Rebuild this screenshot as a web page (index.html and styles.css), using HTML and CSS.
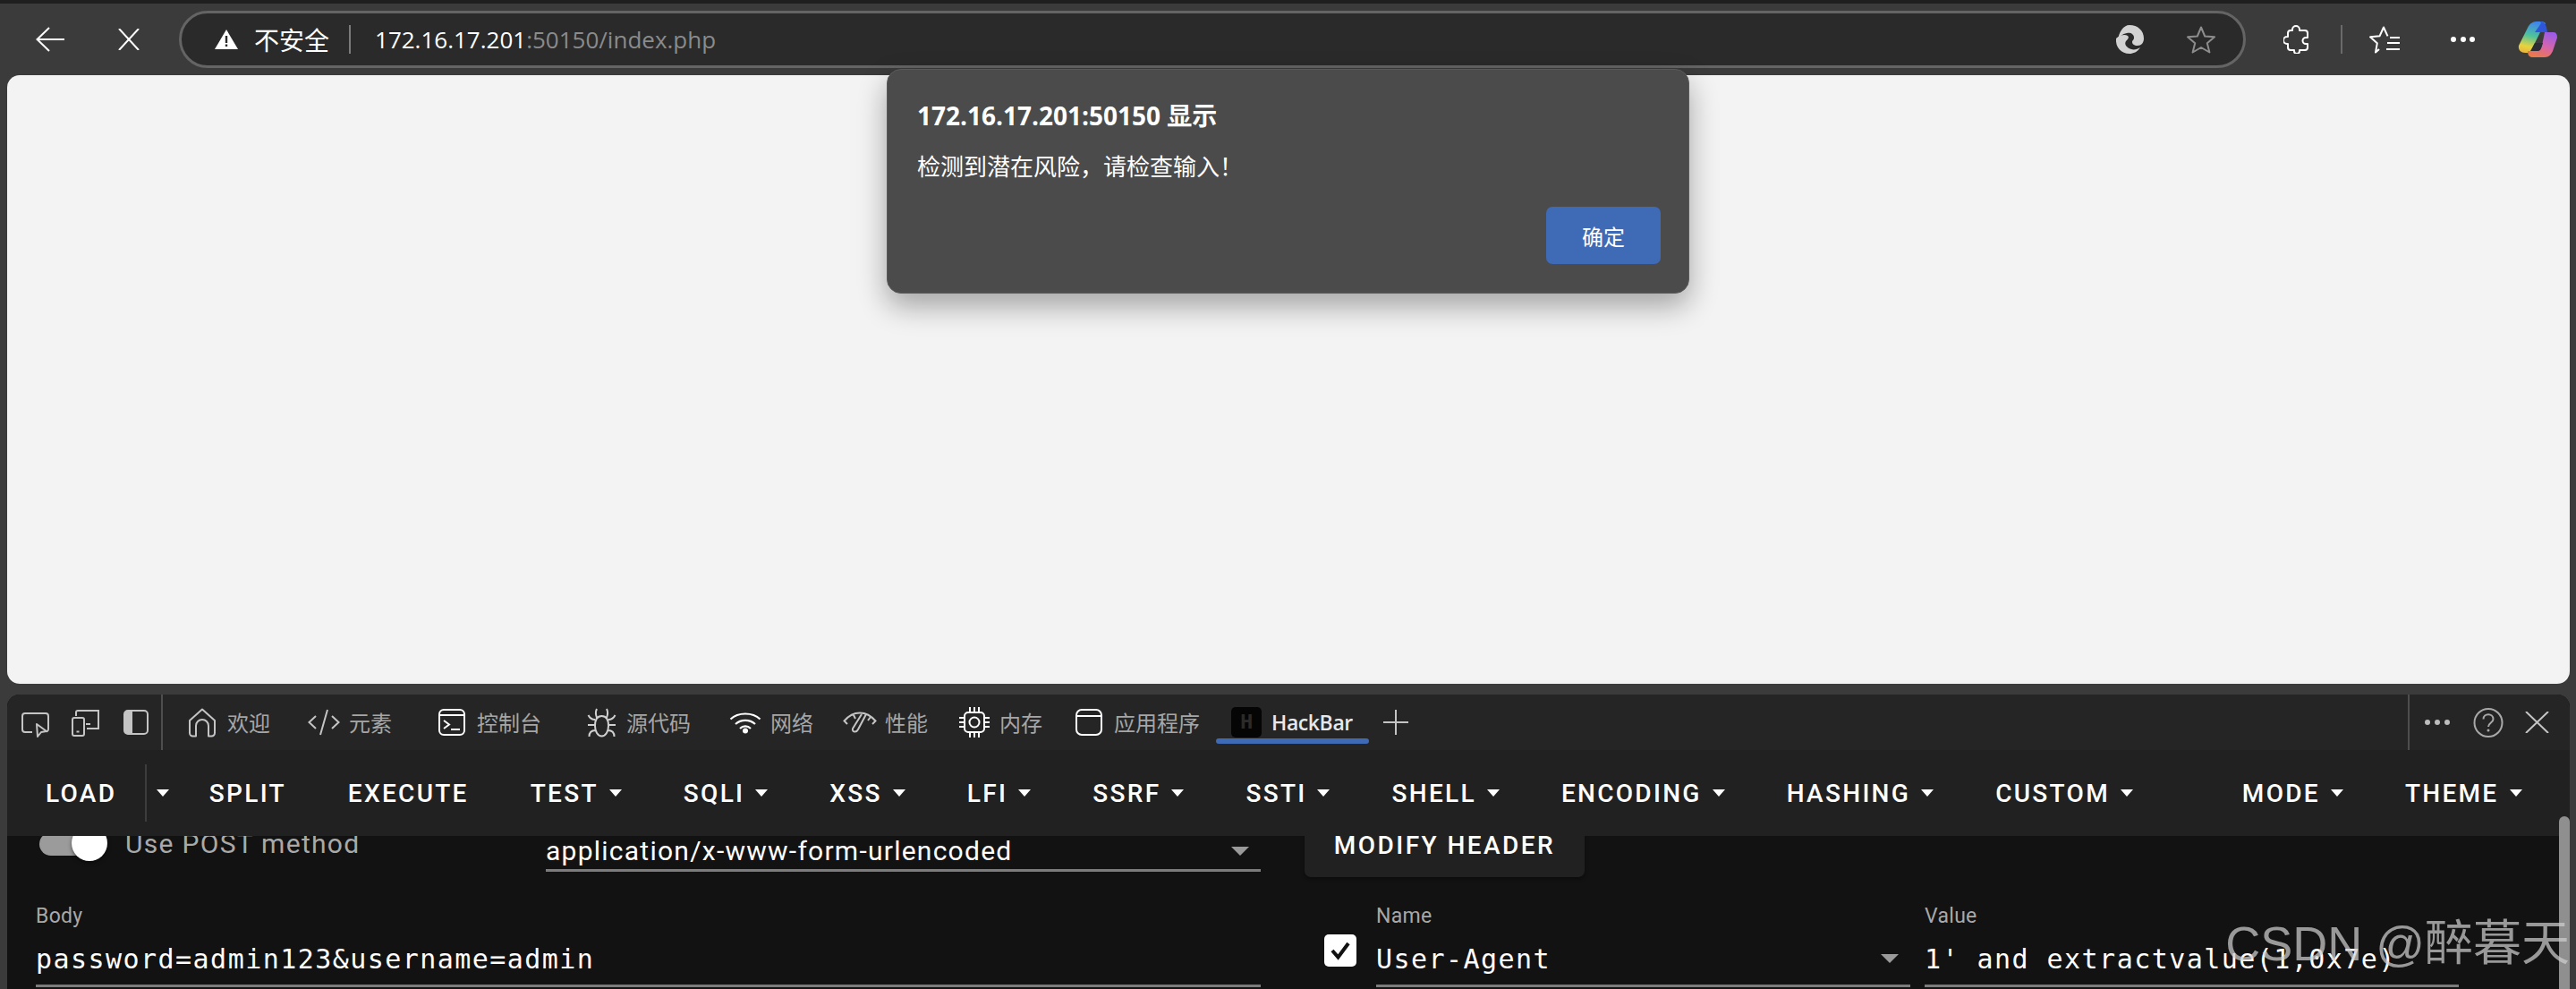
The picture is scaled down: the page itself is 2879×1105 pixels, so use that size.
FILE: index.html
```html
<!DOCTYPE html>
<html lang="zh-CN">
<head>
<meta charset="utf-8">
<title>172.16.17.201:50150/index.php</title>
<link rel="stylesheet" href="styles.css">
</head>
<body>
<div class="window">
  <div class="top-strip"></div>
  <header class="toolbar">
    <svg class="ico back" width="32" height="28" viewBox="0 0 32 28"><path d="M32 14H2M15 1 1.500 14 15 27" fill="none" stroke="#fff" stroke-width="2"/></svg>
    <svg class="ico stop" width="24" height="24" viewBox="0 0 24 24"><path d="M1 0 23 24M23 0 1 24" fill="none" stroke="#fff" stroke-width="2"/></svg>
    <div class="address">
      <svg class="warn" width="26" height="22" viewBox="0 0 26 22"><path d="M13 0 26 22H0Z" fill="#fff"/><path d="M11.800 7h2.400v8h-2.400zM11.800 16.500h2.400v2.500h-2.400z" fill="#2a2a2a"/></svg>
      <span class="insecure">不安全</span>
      <span class="addr-sep"></span>
      <span class="url">172.16.17.201<span class="url-dim">:50150/index.php</span></span>
      <svg class="edge" width="32" height="32" viewBox="0 0 32 32"><path d="M16 0C25 0 32 6 32 15 32 20 29 23 25 23 21 23 19 21 19 19 19 17 21 17 21 14 21 10 17 8 13 9 8 10 4 13 3 17 4 8 9 0 16 0Z" fill="#d2d2d2"/><path d="M1 15C5 11 11 10 14 12 16 14 14 16 12 18 10 21 12 25 18 27 21 28 25 27 28 25 25 30 20 32 16 32 7 32 0 25 1 15Z" fill="#d2d2d2"/></svg>
      <svg class="star" width="32" height="31" viewBox="0 0 32 31"><path d="M16 1.500 20.200 11.500 31 12.300 22.800 19.300 25.400 29.500 16 24 6.600 29.500 9.200 19.300 1 12.300 11.800 11.500Z" fill="none" stroke="#8d8d8d" stroke-width="2" stroke-linejoin="round"/></svg>
    </div>
    <svg class="ext" width="30" height="32" viewBox="0 0 30 32"><path d="M10 6V5a4 4 0 0 1 8 0v1h6a3 3 0 0 1 3 3v5h-2a3.500 3.500 0 0 0 0 7h2v4a3 3 0 0 1-3 3h-6v1a3 3 0 0 1-6 0v-1H8a3 3 0 0 1-3-3v-4H4a4 4 0 0 1 0-8h1V9a3 3 0 0 1 3-3Z" fill="none" stroke="#fff" stroke-width="2" stroke-linejoin="round"/></svg>
    <span class="tool-sep"></span>
    <svg class="fav" width="34" height="31" viewBox="0 0 34 31"><path d="M11 26 7 29.500 8.800 19.300 1 12.300 11.500 11.300 16 1.500 20.500 11.300M34 13H23M34 19H20M34 26H19" fill="none" stroke="#fff" stroke-width="2" stroke-linejoin="round"/></svg>
    <span class="dots-big"><i></i><i></i><i></i></span>
    <svg class="copilot" width="44" height="40" viewBox="0 0 44 40">
      <defs>
        <linearGradient id="cpA" x1="0.500" y1="0" x2="0.300" y2="1"><stop offset="0" stop-color="#3f86ee"/><stop offset=".45" stop-color="#4fc39b"/><stop offset=".8" stop-color="#e7d33f"/><stop offset="1" stop-color="#e9b63c"/></linearGradient>
        <linearGradient id="cpB" x1="0.700" y1="0" x2="0.300" y2="1"><stop offset="0" stop-color="#9c5be8"/><stop offset=".55" stop-color="#d866a8"/><stop offset="1" stop-color="#ea7a45"/></linearGradient>
      </defs>
      <path d="M25 12 31 2C29 .500 28 0 26 0H21C16 0 13 3 11 7L1 27C0 32 4 35 8 35H14L20 22Z" fill="url(#cpA)"/>
      <path d="M25 0C29 0 32 3 33 12H19L26 2Z" fill="#2f56d8"/>
      <path d="M30 12H40C43 12 44 15 44 18L39 33C37 37 35 40 30 40H16C12 40 11 36 11 33H21C24 33 26 30 27 27Z" fill="url(#cpB)"/>
      <path d="M19 24H28L26 30C25 33 23 33 20 33H14Z" fill="#2c2c34"/>
    </svg>
  </header>

  <main class="page"></main>

  <section class="devtools">
    <nav class="tabs">
      <svg class="tool-ico inspect" width="32" height="28" viewBox="0 0 32 28"><path d="M12 22H4a3 3 0 0 1-3-3V4a3 3 0 0 1 3-3h23a3 3 0 0 1 3 3v15a3 3 0 0 1-2 2.600" fill="none" stroke="#c4c4c4" stroke-width="2"/><path d="M17 13 28 21 22 22 18 27Z" fill="none" stroke="#c4c4c4" stroke-width="2" stroke-linejoin="round"/></svg>
      <svg class="tool-ico device" width="32" height="30" viewBox="0 0 32 30"><path d="M5 7V3a2 2 0 0 1 2-2h23v20H17M16 16h5" fill="none" stroke="#c4c4c4" stroke-width="2"/><rect x="1" y="9" width="13" height="20" rx="2" fill="none" stroke="#c4c4c4" stroke-width="2"/><path d="M5.500 24.500h3" stroke="#c4c4c4" stroke-width="2"/></svg>
      <svg class="tool-ico side" width="28" height="28" viewBox="0 0 28 28"><rect x="1" y="1" width="26" height="26" rx="4" fill="none" stroke="#c4c4c4" stroke-width="2"/><path d="M5 1H10V27H5a4 4 0 0 1-4-4V5a4 4 0 0 1 4-4Z" fill="#c4c4c4"/></svg>
      <span class="tabs-sep"></span>
      <div class="tab tab-first">
        <span class="tab-ico"><svg width="32" height="33" viewBox="0 0 32 33"><path d="M16 1.500 30 14V28a3.500 3.500 0 0 1-3.500 3.500H23V20a7 7 0 0 0-14 0V31.500H5.500A3.500 3.500 0 0 1 2 28V14Z" fill="none" stroke="#c4c4c4" stroke-width="2" stroke-linejoin="round"/></svg></span>
        <span>欢迎</span>
      </div>
      <div class="tab tab-elements">
        <span class="tab-ico"><svg width="36" height="30" viewBox="0 0 36 30"><path d="M9 8 1.500 15 9 22M27 8 34.500 15 27 22M22 1 14 29" fill="none" stroke="#c4c4c4" stroke-width="2"/></svg></span>
        <span>元素</span>
      </div>
      <div class="tab tab-wide">
        <span class="tab-ico"><svg width="30" height="30" viewBox="0 0 30 30"><rect x="1" y="1" width="28" height="28" rx="5" fill="none" stroke="#fff" stroke-width="2"/><path d="M1 7H29M6 13 12 17.500 6 22M14 23H24" fill="none" stroke="#fff" stroke-width="2"/></svg></span>
        <span>控制台</span>
      </div>
      <div class="tab tab-wide">
        <span class="tab-ico"><svg width="33" height="33" viewBox="0 0 33 33"><path d="M16.500 9C22 9 24 14 24 20S21 31.500 16.500 31.500 9 26 9 20 11 9 16.500 9ZM11 11C9.500 7 9.500 4 11 1M22 11C23.500 7 23.500 4 22 1M9 13C5 13 3 11 1.500 8M24 13C28 13 30 11 31.500 8M1 19H9M24 19H32M9.500 25C4 25 2.500 28 2.500 32M23.500 25C29 25 30.500 28 30.500 32" fill="none" stroke="#d0d0d0" stroke-width="2"/></svg></span>
        <span>源代码</span>
      </div>
      <div class="tab tab-network">
        <span class="tab-ico"><svg width="36" height="25" viewBox="0 0 36 25"><path d="M1.500 8.500C10 .5 26 .5 34.500 8.500M7 14C13 8.500 23 8.500 29 14M12 19C15.500 15.500 20.500 15.500 24 19" fill="none" stroke="#fff" stroke-width="2.200"/><circle cx="18" cy="21.500" r="3" fill="#fff"/></svg></span>
        <span>网络</span>
      </div>
      <div class="tab">
        <span class="tab-ico"><svg width="38" height="25" viewBox="0 0 38 25"><path d="M5 14 1.500 10.500C7 4 13 1.500 19 1.500S31 4 36.500 10.500L33 14M11.500 3 14 8M31 6 28 10" fill="none" stroke="#c4c4c4" stroke-width="2"/><path d="M26 3 17 20C15 24 10 23 11 19L21 3" fill="none" stroke="#c4c4c4" stroke-width="2" stroke-linejoin="round"/></svg></span>
        <span>性能</span>
      </div>
      <div class="tab">
        <span class="tab-ico"><svg width="34" height="34" viewBox="0 0 34 34"><rect x="6" y="6" width="22" height="22" rx="4" fill="none" stroke="#fff" stroke-width="2"/><circle cx="17" cy="17" r="5.500" fill="none" stroke="#fff" stroke-width="2"/><path d="M12 0V5M17 0V5M22 0V5M12 29V34M17 29V34M22 29V34M0 12H5M0 17H5M0 22H5M29 12H34M29 17H34M29 22H34" stroke="#fff" stroke-width="2"/></svg></span>
        <span>内存</span>
      </div>
      <div class="tab">
        <span class="tab-ico"><svg width="30" height="30" viewBox="0 0 30 30"><rect x="1" y="1" width="28" height="28" rx="6" fill="none" stroke="#fff" stroke-width="2"/><path d="M1 8H29" stroke="#fff" stroke-width="2"/></svg></span>
        <span>应用程序</span>
      </div>
      <div class="tab tab-active">
        <span class="tab-ico"><span class="h-logo">H</span></span>
        <span>HackBar</span>
      </div>
      <svg class="plus" width="28" height="28" viewBox="0 0 28 28"><path d="M14 0V28M0 14H28" stroke="#c4c4c4" stroke-width="2"/></svg>
      <div class="tab-tools">
        <span class="dots-small"><i></i><i></i><i></i></span>
        <svg class="help" width="34" height="33" viewBox="0 0 34 33"><circle cx="17" cy="16.500" r="15.500" fill="none" stroke="#a8a8a8" stroke-width="2"/><path d="M11.500 12.500C11.500 5.500 22.500 5.500 22.500 12.500 22.500 16.500 17 16.500 17 21" fill="none" stroke="#a8a8a8" stroke-width="2"/><circle cx="17" cy="25" r="1.500" fill="#a8a8a8"/></svg>
        <svg class="close" width="27" height="24" viewBox="0 0 27 24"><path d="M1 0 26 24M26 0 1 24" fill="none" stroke="#c4c4c4" stroke-width="2"/></svg>
      </div>
    </nav>

    <nav class="hackbar">
      <button class="hb-btn hb-load">LOAD</button>
      <button class="hb-btn hb-more"><i class="caret"></i></button>
      <button class="hb-btn">SPLIT</button>
      <button class="hb-btn">EXECUTE</button>
      <button class="hb-btn">TEST<i class="caret"></i></button>
      <button class="hb-btn">SQLI<i class="caret"></i></button>
      <button class="hb-btn">XSS<i class="caret"></i></button>
      <button class="hb-btn">LFI<i class="caret"></i></button>
      <button class="hb-btn">SSRF<i class="caret"></i></button>
      <button class="hb-btn">SSTI<i class="caret"></i></button>
      <button class="hb-btn">SHELL<i class="caret"></i></button>
      <button class="hb-btn">ENCODING<i class="caret"></i></button>
      <button class="hb-btn">HASHING<i class="caret"></i></button>
      <button class="hb-btn">CUSTOM<i class="caret"></i></button>
      <button class="hb-btn hb-mode">MODE<i class="caret"></i></button>
      <button class="hb-btn">THEME<i class="caret"></i></button>
    </nav>

    <div class="panel">
      <div class="form">
        <div class="col-left">
          <div class="post-row">
            <div class="post-toggle">
              <span class="switch"><span class="switch-track"></span><span class="switch-thumb"></span></span>
              <span class="switch-label">Use POST method</span>
            </div>
            <div class="select-box">
              <span>application/x-www-form-urlencoded</span>
              <i class="field-caret"></i>
            </div>
          </div>
          <div class="field body-field">
            <label class="field-label">Body</label>
            <div class="field-input">password=admin123&amp;username=admin</div>
          </div>
        </div>
        <div class="col-right">
          <button class="modify">MODIFY HEADER</button>
          <div class="header-row">
            <span class="check"><svg width="24" height="22" viewBox="0 0 24 22"><path d="M3 11 9.500 18.500 21 3" fill="none" stroke="#111" stroke-width="4"/></svg></span>
            <div class="field header-field">
              <label class="field-label">Name</label>
              <div class="field-input name-input">User-Agent<i class="field-caret"></i></div>
            </div>
            <div class="field header-field">
              <label class="field-label">Value</label>
              <div class="field-input">1' and extractvalue(1,0x7e)</div>
            </div>
          </div>
        </div>
      </div>
    </div>
    <span class="scrollbar"></span>
  </section>

  <div class="dialog">
    <div class="dialog-title">172.16.17.201:50150 显示</div>
    <div class="dialog-msg">检测到潜在风险，请检查输入！</div>
    <div class="dialog-actions"><button class="dialog-ok">确定</button></div>
  </div>

  <div class="watermark">CSDN @醉暮天</div>
</div>
</body>
</html>
```

FILE: styles.css
```css
* { box-sizing: border-box; }
html, body { margin: 0; padding: 0; background: #3b3b3b; }
button { font: inherit; letter-spacing: inherit; border: 0; background: none; color: inherit; padding: 0; }

.window {
  position: relative;
  width: 2879px;
  height: 1105px;
  overflow: hidden;
  display: flex;
  flex-direction: column;
  background: #3b3b3b;
  font-family: "Open Sans", "Noto Sans CJK SC", sans-serif;
}
.top-strip { height: 4px; background: #1f1f1f; flex: none; }

/* browser toolbar */
.toolbar { height: 80px; flex: none; display: flex; align-items: center; }
.back { margin: 0 0 0 40px; }
.stop { margin-left: 60px; }
.address {
  margin-left: 44px;
  width: 2310px;
  height: 64px;
  border: 3px solid #646464;
  border-radius: 32px;
  background: #2a2a2a;
  display: flex;
  align-items: center;
  padding-left: 37px;
}
.insecure { margin-left: 18px; font-size: 28px; color: #fff; font-family: "Noto Sans CJK SC", sans-serif; line-height: 1; }
.addr-sep { width: 2px; height: 32px; background: #7a7a7a; margin: 0 27px 0 22px; }
.url { font-size: 26px; color: #fff; white-space: nowrap; }
.url-dim { color: #8b8b8b; }
.edge { margin-left: auto; }
.star { margin-left: 48px; margin-right: 31px; }
.ext { margin-left: 42px; }
.tool-sep { width: 2px; height: 32px; background: #6a6a6a; margin-left: 34px; }
.fav { margin-left: 30px; }
.dots-big { display: flex; gap: 4.5px; margin-left: 57px; }
.dots-big i { width: 6px; height: 6px; border-radius: 50%; background: #fff; }
.copilot { margin-left: 48px; }

/* page */
.page { height: 680px; flex: none; margin: 0 7px 0 8px; background: #f3f3f3; border-radius: 14px; }

/* devtools */
.devtools {
  position: relative;
  margin: 12px 7px 0 8px;
  flex: 1;
  min-height: 0;
  border-radius: 14px 14px 0 0;
  overflow: hidden;
  display: flex;
  flex-direction: column;
  background: #121212;
}
.tabs {
  height: 62px;
  flex: none;
  background: #252525;
  display: flex;
  align-items: center;
  padding-left: 16px;
  font-size: 24px;
  color: #a6a6a6;
  font-family: "Noto Sans CJK SC", sans-serif;
}
.tool-ico { flex: none; }
.inspect { margin-top: 6px; }
.device { margin-left: 24px; margin-top: 2px; }
.side { margin-left: 26px; }
.tabs-sep { width: 2px; height: 62px; background: #4e4e4e; margin-left: 14px; }
.tab { display: flex; align-items: center; gap: 8px; margin-left: 32px; white-space: nowrap; line-height: 1; }
.tab-first { margin-left: 24px; }
.tab-elements { margin-left: 40px; }
.tab-wide { margin-left: 47px; }
.tab-network { margin-left: 41px; }
.tab-ico { width: 40px; flex: none; display: flex; align-items: center; justify-content: center; }
.tab-active { position: relative; color: #e8e8e8; font-weight: 600; font-size: 23px; letter-spacing: -.4px; font-family: "Open Sans", sans-serif; }
.tab-active::after {
  content: "";
  position: absolute;
  left: -14px;
  right: -18px;
  top: 35px;
  height: 6px;
  border-radius: 3px;
  background: #3f6ab5;
}
.h-logo {
  width: 34px;
  height: 34px;
  border-radius: 5px;
  background: #050505;
  color: #2b2b2b;
  font: 700 24px "Liberation Mono", monospace;
  display: flex;
  align-items: center;
  justify-content: center;
}
.plus { margin-left: 34px; flex: none; }
.tab-tools {
  margin-left: auto;
  height: 62px;
  width: 181px;
  border-left: 2px solid #4e4e4e;
  display: flex;
  align-items: center;
  padding-left: 17px;
}
.dots-small { display: flex; gap: 5px; }
.dots-small i { width: 6px; height: 6px; border-radius: 50%; background: #bdbdbd; }
.help { margin-left: 26px; }
.close { margin-left: 24px; }

/* hackbar nav */
.hackbar {
  height: 96px;
  flex: none;
  background: #212121;
  display: flex;
  align-items: center;
  padding: 0 19px 0 8px;
  font: 500 28px Roboto, sans-serif;
  letter-spacing: 2.3px;
  color: #fff;
}
.hb-btn {
  height: 64px;
  padding: 0 34.5px;
  display: flex;
  align-items: center;
  gap: 12px;
  white-space: nowrap;
}
.hb-load { padding: 0 32px 0 35px; border-right: 2px solid #3d3d3d; }
.hb-more { padding: 0 10.5px; }
.hb-mode { margin-left: auto; }
.caret { width: 0; height: 0; border-style: solid; border-width: 8px 7.500px 0; border-color: #fff transparent transparent; }

/* panel */
.panel { flex: 1; min-height: 0; overflow: hidden; padding-left: 32px; }
.form { display: flex; margin-top: -22px; font-family: Roboto, sans-serif; }
.col-left { width: 1369px; flex: none; }
.col-right { margin-left: 49px; }
.post-row { display: flex; height: 68px; }
.post-toggle { width: 570px; flex: none; display: flex; align-items: flex-start; padding-top: 10px; }
.switch { position: relative; width: 80px; height: 40px; flex: none; margin-left: 4px; }
.switch-track { position: absolute; left: 0; top: 8px; width: 60px; height: 26px; border-radius: 13px; background: #9b9b9b; }
.switch-thumb { position: absolute; left: 36px; top: 0; width: 40px; height: 40px; border-radius: 50%; background: #fff; box-shadow: 0 2px 4px rgba(0,0,0,.5); }
.switch-label { margin-left: 16px; font-size: 30px; line-height: 42px; color: #a9a9a9; letter-spacing: 1.3px; white-space: nowrap; }
.select-box {
  flex: 1;
  height: 62px;
  border-bottom: 3px solid #7c7c7c;
  padding-top: 19px;
  font-size: 30px;
  line-height: 40px;
  letter-spacing: 1.25px;
  color: #fff;
  position: relative;
}
.field-caret {
  position: absolute;
  right: 13px;
  width: 0;
  height: 0;
  border-style: solid;
  border-width: 10px 10.500px 0;
  border-color: #9a9a9a transparent transparent;
}
.select-box .field-caret { top: 34px; }
.field { display: block; }
.body-field { margin-top: 29px; }
.field-label { display: block; font-size: 23px; line-height: 30px; color: #a8a8a8; letter-spacing: .3px; }
.field-input {
  position: relative;
  height: 64px;
  padding-top: 8px;
  border-bottom: 3px solid #7c7c7c;
  font: 30px/50px "DejaVu Sans Mono", monospace;
  letter-spacing: 1.45px;
  color: #fff;
  white-space: nowrap;
}
.name-input .field-caret { right: 13px; top: 27px; }

.modify {
  display: block;
  width: 313px;
  height: 68px;
  padding-bottom: 3px;
  border-radius: 0 0 7px 7px;
  background: #212121;
  box-shadow: 0 2px 4px rgba(0,0,0,.4);
  color: #fff;
  font: 500 28px Roboto, sans-serif;
  letter-spacing: 2.45px;
  white-space: nowrap;
}
.header-row { display: flex; margin-top: 29px; align-items: flex-start; }
.check {
  width: 36px;
  height: 36px;
  margin: 35px 22px 0 22px;
  flex: none;
  border-radius: 5px;
  background: #fff;
  display: flex;
  align-items: center;
  justify-content: center;
}
.header-field { width: 597px; flex: none; }
.header-field + .header-field { margin-left: 16px; }
.scrollbar { position: absolute; right: 0; top: 136px; width: 12px; height: 240px; border-radius: 6px 6px 0 0; background: #8f8f8f; }

/* dialog */
.dialog {
  position: absolute;
  left: 991px;
  top: 77px;
  width: 897px;
  height: 251px;
  padding: 33px 31px 32px 33px;
  border-radius: 16px;
  background: #4b4b4b;
  border: 1px solid #5a5a5a;
  box-shadow: 0 14px 32px rgba(0,0,0,.33);
  color: #fff;
  display: flex;
  flex-direction: column;
  font-family: "Open Sans", "Noto Sans CJK SC", sans-serif;
}
.dialog-title { font-size: 28px; font-weight: 700; line-height: 36px; }
.dialog-msg { margin-top: 20px; font-size: 26px; line-height: 36px; font-family: "Noto Sans CJK SC", sans-serif; }
.dialog-actions { margin-top: auto; display: flex; justify-content: flex-end; }
.dialog-ok { width: 128px; height: 64px; border-radius: 7px; background: #3f6ab5; color: #fff; font: 24px "Noto Sans CJK SC", sans-serif; }

.watermark {
  position: absolute;
  right: 7px;
  top: 1020px;
  font: 54px/68px "Liberation Sans", "Noto Sans CJK SC", sans-serif;
  color: rgba(205,205,205,.72);
  white-space: nowrap;
}
```
